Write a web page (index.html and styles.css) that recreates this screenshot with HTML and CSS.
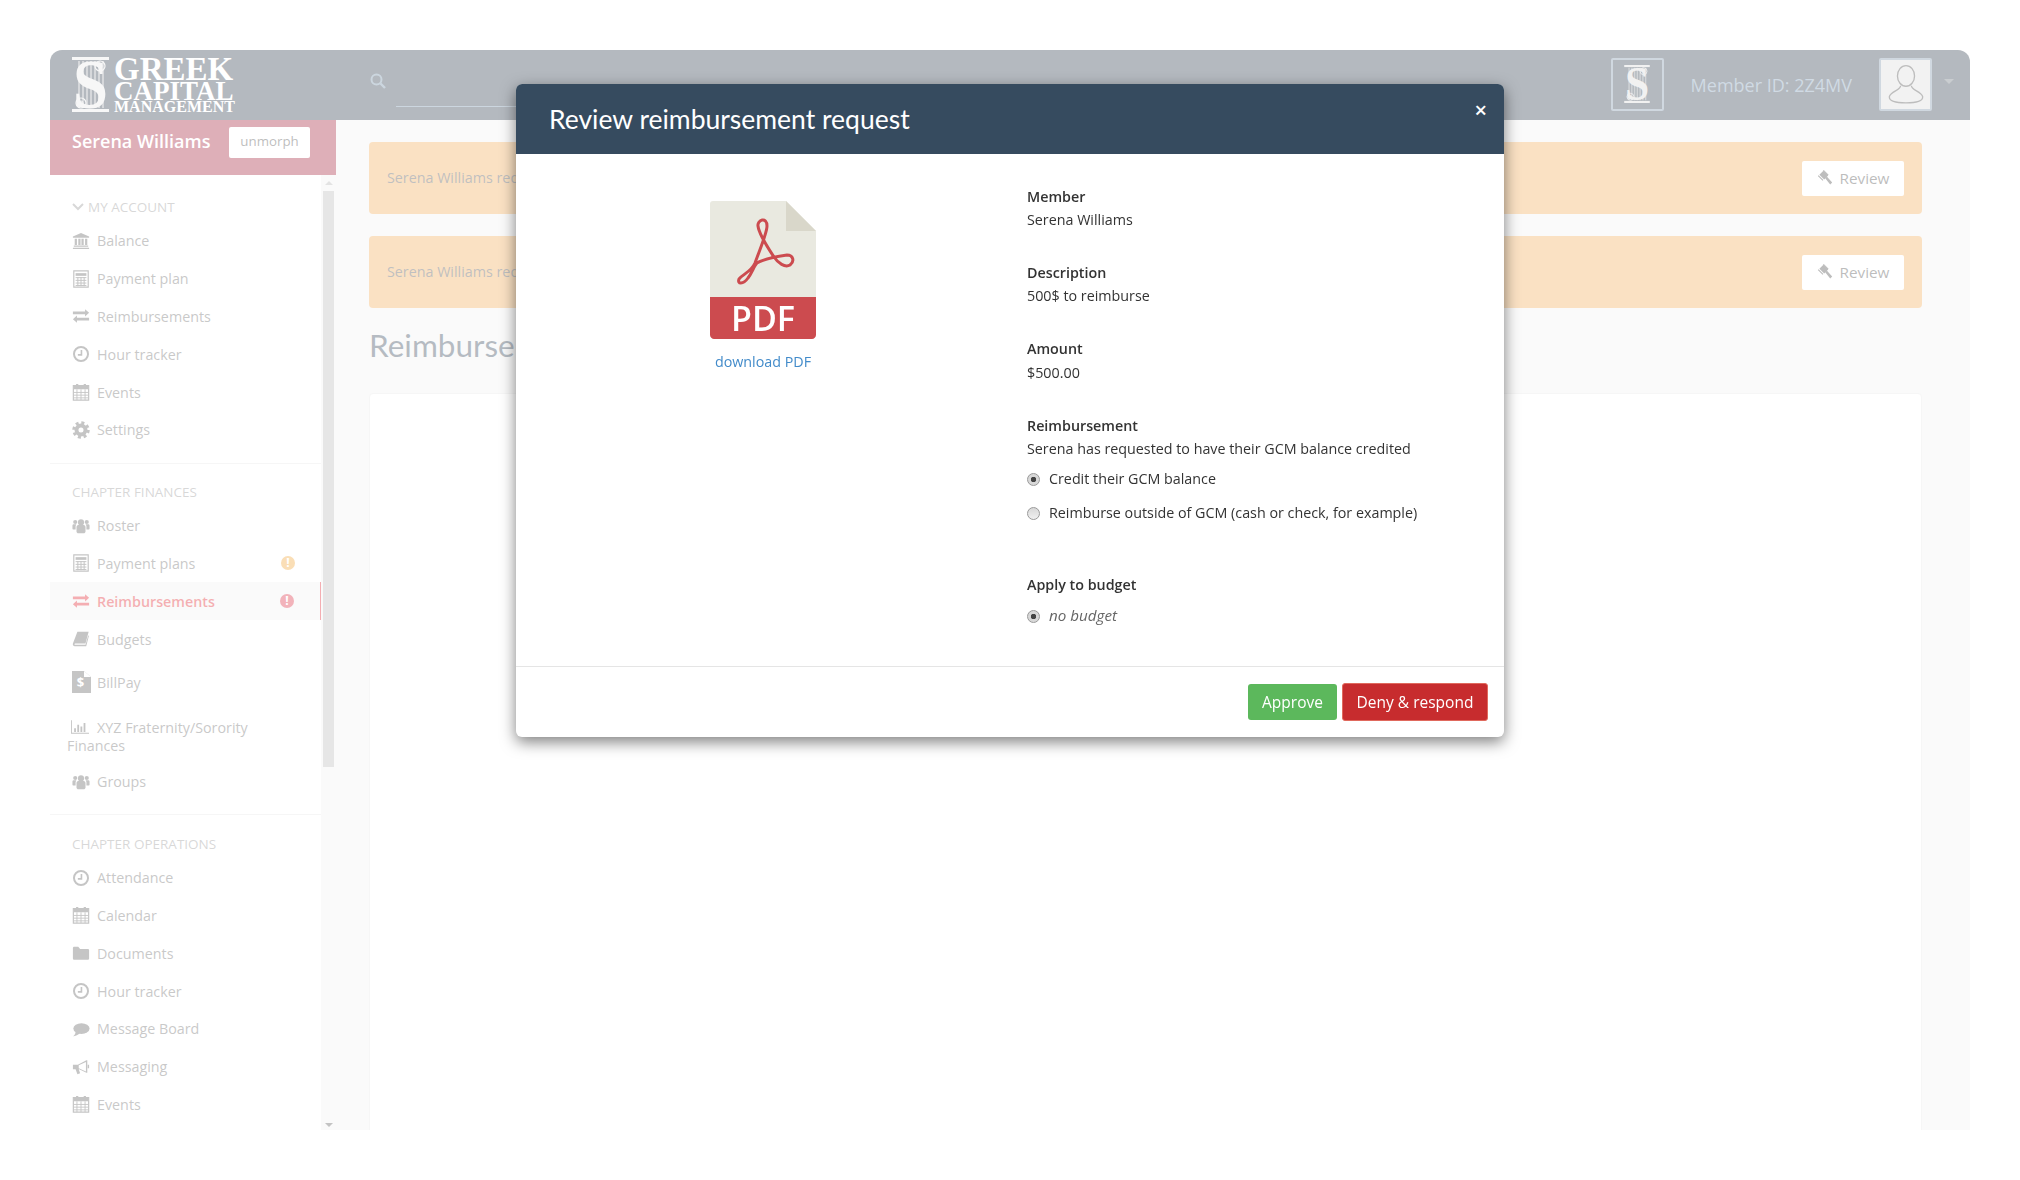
FILE: index.html
```html
<!DOCTYPE html>
<html lang="en">
<head>
  <meta charset="UTF-8">
  <title>Reimbursements</title>
  <link rel="stylesheet" href="styles.css">
</head>
<body>
  <!-- icon set -->
  <svg class="icon-defs" width="0" height="0" aria-hidden="true">
    <symbol id="i-mark" viewBox="0 0 37 55">
      <rect x="0" y="0" width="37" height="3"/>
      <rect x="0" y="52" width="37" height="3"/>
      <path d="M6 4h2v47H6zM10 4h2v47h-2zM14 4h2v47h-2zM18 4h2v47h-2zM22 4h2v47h-2zM26 4h2v47h-2zM30 4h2v47h-2z" opacity=".5"/>
      <circle cx="28" cy="9" r="5" fill="none" stroke="currentColor" stroke-width="1.200"/>
      <circle cx="28" cy="9" r="2" fill="none" stroke="currentColor" stroke-width="1"/>
      <circle cx="9" cy="46" r="5" fill="none" stroke="currentColor" stroke-width="1.200"/>
      <circle cx="9" cy="46" r="2" fill="none" stroke="currentColor" stroke-width="1"/>
      <text x="1" y="51" textLength="35" lengthAdjust="spacingAndGlyphs" class="mark-letter">S</text>
    </symbol>
    <symbol id="i-bank" viewBox="0 0 20 20">
      <path d="M10 1l9 4v1.500H1V5z"/>
      <path d="M3 7.500h2.500v7H3zM7 7.500h2.500v7H7zM10.500 7.500H13v7h-2.500zM14.500 7.500H17v7h-2.500zM2 15h16v1.500H2zM1 17.500h18V19H1z"/>
    </symbol>
    <symbol id="i-calc" viewBox="0 0 20 20">
      <path d="M2 1h16v18H2z" fill="none" stroke="currentColor" stroke-width="1.300"/>
      <path d="M4 3.500h12v3H4z"/>
      <path d="M4 8.500h12M4 11.500h12M4 14.500h12M4 17.200h12M6.500 8v10M10 8v10M13.500 8v10" fill="none" stroke="currentColor" stroke-width="1.100"/>
    </symbol>
    <symbol id="i-exchange" viewBox="0 0 20 20">
      <path d="M1 5h13.500V2.500L19 6.500l-4.500 4V8H1zM19 12H5.500V9.500L1 13.500l4.500 4V15H19z"/>
    </symbol>
    <symbol id="i-clock" viewBox="0 0 20 20">
      <circle cx="10" cy="10" r="7.800" fill="none" stroke="currentColor" stroke-width="2.200"/>
      <path d="M10.500 5.500v5.500H6.500" fill="none" stroke="currentColor" stroke-width="1.800"/>
    </symbol>
    <symbol id="i-calendar" viewBox="0 0 20 20">
      <path d="M1.500 3h17v16h-17z" fill="none" stroke="currentColor" stroke-width="1.300"/>
      <path d="M2 3h16v4H2zM4.500 1h2.500v4H4.500zM13 1h2.500v4H13z"/>
      <path d="M2 10.500h16M2 13.500h16M2 16.500h16M5.500 7v12M10 7v12M14.500 7v12" fill="none" stroke="currentColor" stroke-width="1"/>
    </symbol>
    <symbol id="i-cog" viewBox="0 0 20 20">
      <circle cx="10" cy="10" r="5" fill="none" stroke="currentColor" stroke-width="4.400"/>
      <circle cx="10" cy="10" r="8" fill="none" stroke="currentColor" stroke-width="3.400" stroke-dasharray="3.300 3"/>
    </symbol>
    <symbol id="i-users" viewBox="0 0 20 20">
      <circle cx="10" cy="6" r="3.400"/>
      <circle cx="3.600" cy="5.500" r="2.300"/>
      <circle cx="16.400" cy="5.500" r="2.300"/>
      <path d="M5 11c0-1 1-2 2-2h6c1 0 2 1 2 2v5c0 1-1 2-2 2H7c-1 0-2-1-2-2zM.500 9.500c0-1 .8-1.500 1.500-1.500h2.800L4 10v4H1.500c-.6 0-1-.5-1-1zM19.500 9.500c0-1-.8-1.500-1.500-1.500h-2.800L16 10v4h2.500c.6 0 1-.5 1-1z"/>
    </symbol>
    <symbol id="i-book" viewBox="0 0 20 20">
      <path d="M6 2h12.500l-3.500 13H3.500c-.8 0-1 1.500 0 1.500H15l3-10.500.8.500L15.800 18H3c-1.500 0-2.500-1.500-2-3z"/>
    </symbol>
    <symbol id="i-billpay" viewBox="0 0 19 22">
      <path d="M0 0h12l7 6v16H0z"/>
      <path d="M12 0v6h7z" fill="#fff"/>
      <text x="8.500" y="15.500" text-anchor="middle" class="bill-letter">$</text>
    </symbol>
    <symbol id="i-bars" viewBox="0 0 20 15">
      <path d="M0 0h1v13.800h19v1.200H0z"/>
      <path d="M3.500 9h2v4h-2zM7 5h2v8H7zM10.500 7h2v6h-2zM14 3h2v10h-2z"/>
    </symbol>
    <symbol id="i-folder" viewBox="0 0 20 20">
      <path d="M1 4.500C1 3.500 1.800 3 2.500 3h4.500L9 5.500h8.500c.8 0 1.500.6 1.500 1.500v9c0 .9-.7 1.500-1.500 1.500h-15C1.700 17.500 1 16.900 1 16z"/>
    </symbol>
    <symbol id="i-comment" viewBox="0 0 20 20">
      <ellipse cx="10.500" cy="9.500" rx="9" ry="6"/>
      <path d="M4 13c0 2-1 4-3 5 3 0 6-1.500 8-3.500z"/>
    </symbol>
    <symbol id="i-bullhorn" viewBox="0 0 20 20">
      <path d="M1 7.500h5.500L16 2.500h1v14h-1l-8-4-.5 0 1.500 4.500-3 1L4 12.500H1zM17.500 7.500h1.500v4h-1.500z"/>
      <path d="M7.500 8v3.500l8 3.500V4.500z" fill="#fff"/>
    </symbol>
    <symbol id="i-gavel" viewBox="0 0 20 20">
      <path d="M8 1l6 6-5 5-6-6zM10.500 10.500l2-2 6.500 7-2.500 2.500z"/>
      <path d="M1 7.500l1-1 6 6-1 1zM7.500 .5l1-.5 6 6-1 1z"/>
    </symbol>
    <symbol id="i-search" viewBox="0 0 16 16">
      <circle cx="6.500" cy="6.500" r="5" fill="none" stroke="currentColor" stroke-width="2"/>
      <path d="M10.500 10.500l4.500 4.500" fill="none" stroke="currentColor" stroke-width="2.400"/>
    </symbol>
    <symbol id="i-person" viewBox="0 0 40 44">
      <ellipse cx="20" cy="13" rx="9.500" ry="11.500" fill="none" stroke="currentColor" stroke-width="1.500"/>
      <path d="M14 24c0 5-11 6-12.500 12C1 41 8 43 20 43s19-2 18.500-7C37 30 26 29 26 24" fill="none" stroke="currentColor" stroke-width="1.500"/>
    </symbol>
  </svg>

  <div class="app">
    <header class="topbar">
      <a class="brand">
        <svg class="brand-mark"><use href="#i-mark"/></svg>
        <div class="brand-name">
          <span class="brand-l1">GREEK</span>
          <span class="brand-l2">CAPITAL</span>
          <span class="brand-l3">MANAGEMENT</span>
        </div>
      </a>
      <div class="search">
        <svg class="search-icon"><use href="#i-search"/></svg>
        <div class="search-line"></div>
      </div>
      <div class="top-right">
        <div class="chapter-box"><svg class="chapter-mark"><use href="#i-mark"/></svg></div>
        <span class="member-id">Member ID: 2Z4MV</span>
        <div class="avatar"><svg class="avatar-icon"><use href="#i-person"/></svg></div>
        <span class="caret"></span>
      </div>
    </header>

    <div class="columns">
      <aside class="sidebar">
        <div class="morph-bar">
          <span class="morph-name">Serena Williams</span>
          <button class="morph-btn">unmorph</button>
        </div>
        <div class="side-scroll">
          <nav class="side-nav">
            <section class="nav-group first">
              <h4 class="nav-title"><svg class="chevron" viewBox="0 0 12 8"><path d="M1 1l5 5 5-5" fill="none" stroke="currentColor" stroke-width="2"/></svg>MY ACCOUNT</h4>
              <a class="nav-item"><svg class="nav-icon"><use href="#i-bank"/></svg>Balance</a>
              <a class="nav-item"><svg class="nav-icon"><use href="#i-calc"/></svg>Payment plan</a>
              <a class="nav-item"><svg class="nav-icon"><use href="#i-exchange"/></svg>Reimbursements</a>
              <a class="nav-item"><svg class="nav-icon"><use href="#i-clock"/></svg>Hour tracker</a>
              <a class="nav-item"><svg class="nav-icon"><use href="#i-calendar"/></svg>Events</a>
              <a class="nav-item"><svg class="nav-icon"><use href="#i-cog"/></svg>Settings</a>
            </section>
            <section class="nav-group">
              <h4 class="nav-title">CHAPTER FINANCES</h4>
              <a class="nav-item"><svg class="nav-icon"><use href="#i-users"/></svg>Roster</a>
              <a class="nav-item"><svg class="nav-icon"><use href="#i-calc"/></svg>Payment plans<span class="badge warn">!</span></a>
              <a class="nav-item active"><svg class="nav-icon"><use href="#i-exchange"/></svg>Reimbursements<span class="badge danger">!</span></a>
              <a class="nav-item"><svg class="nav-icon"><use href="#i-book"/></svg>Budgets</a>
              <a class="nav-item tall"><svg class="nav-icon bill"><use href="#i-billpay"/></svg>BillPay</a>
              <a class="nav-item wrap"><svg class="nav-icon bars"><use href="#i-bars"/></svg>XYZ Fraternity/Sorority Finances</a>
              <a class="nav-item"><svg class="nav-icon"><use href="#i-users"/></svg>Groups</a>
            </section>
            <section class="nav-group last">
              <h4 class="nav-title">CHAPTER OPERATIONS</h4>
              <a class="nav-item"><svg class="nav-icon"><use href="#i-clock"/></svg>Attendance</a>
              <a class="nav-item"><svg class="nav-icon"><use href="#i-calendar"/></svg>Calendar</a>
              <a class="nav-item"><svg class="nav-icon"><use href="#i-folder"/></svg>Documents</a>
              <a class="nav-item"><svg class="nav-icon"><use href="#i-clock"/></svg>Hour tracker</a>
              <a class="nav-item"><svg class="nav-icon"><use href="#i-comment"/></svg>Message Board</a>
              <a class="nav-item"><svg class="nav-icon"><use href="#i-bullhorn"/></svg>Messaging</a>
              <a class="nav-item"><svg class="nav-icon"><use href="#i-calendar"/></svg>Events</a>
            </section>
          </nav>
          <div class="scrollbar">
            <span class="arrow up"></span>
            <div class="thumb"></div>
            <span class="arrow down"></span>
          </div>
        </div>
      </aside>

      <main class="content">
        <div class="notice">
          <span>Serena Williams requested a reimbursement</span>
          <button class="review-btn"><svg class="review-icon"><use href="#i-gavel"/></svg>Review</button>
        </div>
        <div class="notice">
          <span>Serena Williams requested a reimbursement</span>
          <button class="review-btn"><svg class="review-icon"><use href="#i-gavel"/></svg>Review</button>
        </div>
        <h1 class="page-title">Reimbursements</h1>
        <div class="table-card"></div>
      </main>
    </div>
  </div>

  <!-- modal -->
  <div class="backdrop"></div>
  <div class="modal">
    <div class="modal-head">
      <h2>Review reimbursement request</h2>
      <button class="modal-close">&times;</button>
    </div>
    <div class="modal-body">
      <div class="doc-col">
        <svg class="pdf-icon" viewBox="0 0 106 138">
          <path d="M3 0h73l30 30v66H0V3c0-2 1-3 3-3z" fill="#e9e9e0"/>
          <path d="M76 0l30 30H76z" fill="#d9d7ca"/>
          <path d="M0 96h106v38c0 2-2 4-4 4H4c-2 0-4-2-4-4z" fill="#cc4b4f"/>
          <path d="M48 25C47 19 57 15 57 25C57 32 50 48 45 62C41 71 33 73 29 78C27 83 33 84 38 77C42 72 44 65 47 62C53 58 70 55 77 54C83 54 85 60 80 64C75 67 68 62 64 56C58 47 49 33 48 25Z" fill="none" stroke="#cc4b4f" stroke-width="3"/>
          <text x="53" y="130" text-anchor="middle" class="pdf-label">PDF</text>
        </svg>
        <a class="doc-link">download PDF</a>
      </div>
      <div class="info-col">
        <div class="field">
          <div class="field-label">Member</div>
          <div>Serena Williams</div>
        </div>
        <div class="field">
          <div class="field-label">Description</div>
          <div>500$ to reimburse</div>
        </div>
        <div class="field">
          <div class="field-label">Amount</div>
          <div>$500.00</div>
        </div>
        <div class="field reimburse">
          <div class="field-label">Reimbursement</div>
          <div>Serena has requested to have their GCM balance credited</div>
          <label class="radio"><input type="radio" name="how" checked>Credit their GCM balance</label>
          <label class="radio"><input type="radio" name="how">Reimburse outside of GCM (cash or check, for example)</label>
        </div>
        <div class="field">
          <div class="field-label">Apply to budget</div>
          <label class="radio none"><input type="radio" name="budget" checked><em>no budget</em></label>
        </div>
      </div>
    </div>
    <div class="modal-foot">
      <button class="btn btn-ok">Approve</button>
      <button class="btn btn-deny">Deny &amp; respond</button>
    </div>
  </div>
</body>
</html>
```

FILE: styles.css
```css
* {
  box-sizing: border-box;
}

html, body {
  margin: 0;
  padding: 0;
}

body {
  width: 2020px;
  height: 1180px;
  padding: 50px;
  overflow: hidden;
  background: #fff;
  font-family: "Open Sans", sans-serif;
  font-size: 14.300px;
  color: #333;
}

button {
  font-family: inherit;
}

.icon-defs {
  position: absolute;
}

.mark-letter {
  font-family: "Liberation Serif", serif;
  font-weight: bold;
  font-size: 70px;
  fill: currentColor;
}

.bill-letter {
  font-family: "Open Sans", sans-serif;
  font-weight: bold;
  font-size: 13px;
  fill: #fff;
}

/* frame */
.app {
  width: 1920px;
  height: 1080px;
  display: flex;
  flex-direction: column;
  border-radius: 12px 12px 0 0;
  overflow: hidden;
  background: #f0f0f0;
}

.topbar {
  height: 70px;
  flex: none;
  display: flex;
  align-items: center;
  padding: 0 16px 0 22px;
  background: #2a3848;
  color: #fff;
}

.brand {
  display: flex;
  gap: 5px;
  width: 298px;
  color: #e9e9e9;
}

.brand-mark {
  width: 37px;
  height: 55px;
  fill: currentColor;
  color: #e9e9e9;
}

.brand-name {
  display: flex;
  flex-direction: column;
  font-family: "Liberation Serif", serif;
  font-weight: bold;
  color: #fff;
  white-space: nowrap;
}

.brand-l1 {
  font-size: 33px;
  line-height: 24px;
}

.brand-l2 {
  font-size: 27px;
  line-height: 20px;
}

.brand-l3 {
  font-size: 16px;
  line-height: 12px;
}

.search {
  display: flex;
  align-items: center;
  gap: 10px;
}

.search-icon {
  width: 16px;
  height: 16px;
  margin-top: -8px;
  color: #6d8ba3;
}

.search-line {
  width: 260px;
  height: 1px;
  margin-top: 42px;
  background: #6d8ba3;
}

.top-right {
  margin-left: auto;
  margin-bottom: 2px;
  display: flex;
  align-items: center;
}

.chapter-box, .avatar {
  width: 53px;
  height: 53px;
  display: flex;
  align-items: center;
  justify-content: center;
  border: 2px solid #788fa6;
  border-radius: 2px;
}

.chapter-mark {
  width: 26px;
  height: 38px;
  fill: currentColor;
  color: #d8d8d8;
}

.member-id {
  margin: 1px 27px 0;
  font-size: 18px;
  color: #7896b2;
}

.avatar {
  background: #dadada;
}

.avatar-icon {
  width: 36px;
  height: 40px;
  color: #444;
}

.caret {
  margin: -5px 0 0 12px;
  border-top: 5px solid #666f78;
  border-left: 5px solid transparent;
  border-right: 5px solid transparent;
}

.columns {
  flex: 1;
  display: flex;
  min-height: 0;
}

/* sidebar */
.sidebar {
  width: 286px;
  flex: none;
  display: flex;
  flex-direction: column;
  background: #fff;
}

.morph-bar {
  height: 55px;
  flex: none;
  display: flex;
  align-items: flex-start;
  padding: 7px 26px 0 22px;
  background: #a11a34;
}

.morph-name {
  flex: 1;
  font-size: 18px;
  font-weight: 600;
  line-height: 29px;
  color: #fff;
}

.morph-btn {
  width: 81px;
  height: 31px;
  padding: 0 0 3px;
  border: none;
  border-radius: 2px;
  background: #fff;
  font-size: 13.300px;
  color: #444;
}

.side-scroll {
  flex: 1;
  display: flex;
  min-height: 0;
}

.side-nav {
  width: 271px;
  overflow: hidden;
  color: #646464;
}

.nav-group {
  padding: 19px 0 13px;
  border-bottom: 1px solid #e4e4e4;
}

.nav-group.first {
  padding-top: 23px;
  padding-bottom: 14px;
}

.nav-group.last {
  border-bottom: none;
  padding-top: 20px;
}

.nav-title {
  margin: 0 0 6px;
  padding-left: 22px;
  font-size: 13.500px;
  font-weight: 400;
  line-height: 18px;
  color: #909090;
}

.chevron {
  width: 12px;
  height: 8px;
  margin-right: 4px;
  vertical-align: 1px;
}

.nav-item {
  height: 37.800px;
  display: flex;
  align-items: center;
  padding: 0 26px 0 22px;
}

.nav-icon {
  width: 18px;
  height: 18px;
  margin-right: 7px;
  fill: currentColor;
  color: #5a5a5a;
  flex: none;
}

.nav-icon.bill {
  width: 19px;
  height: 22px;
  margin-right: 6px;
}

.nav-item.tall {
  height: 49px;
}

.nav-item.wrap {
  display: block;
  height: 56px;
  padding: 12px 60px 0 17px;
  line-height: 18px;
}

.nav-icon.bars {
  height: 14px;
  margin-left: 4px;
  margin-right: 8px;
  vertical-align: -1px;
}

.nav-item.active {
  width: 271px;
  background: #f0f0f0;
  border-right: 1px solid #df1823;
  font-weight: 600;
  color: #df1823;
}

.nav-item.active .nav-icon {
  color: #df1823;
}

.badge {
  width: 14px;
  height: 14px;
  margin-left: auto;
  border-radius: 50%;
  font-size: 12px;
  font-weight: 700;
  line-height: 14px;
  text-align: center;
  color: #fff;
}

.badge.warn {
  background: #f0a030;
}

.badge.danger {
  background: #d9263a;
}

.scrollbar {
  width: 15px;
  display: flex;
  flex-direction: column;
  align-items: center;
  background: #f0f0f0;
}

.thumb {
  width: 11px;
  height: 576px;
  margin-top: 6px;
  background: #b7b7b7;
}

.arrow {
  border-left: 4px solid transparent;
  border-right: 4px solid transparent;
}

.arrow.up {
  margin-top: 6px;
  border-bottom: 4px solid #b0b0b0;
}

.arrow.down {
  margin-top: auto;
  margin-bottom: 3px;
  border-top: 4px solid #555;
}

/* main */
.content {
  flex: 1;
  min-width: 0;
  padding: 22px 48px 0 33px;
}

.notice {
  height: 72px;
  margin-bottom: 22px;
  display: flex;
  align-items: center;
  justify-content: space-between;
  padding: 0 18px 0 18px;
  border-radius: 4px;
  background: #f1a954;
  color: #4a4a4a;
}

.notice span {
  margin-bottom: 2px;
}

.review-btn {
  width: 102px;
  height: 35px;
  display: flex;
  align-items: center;
  justify-content: center;
  gap: 7px;
  border: none;
  border-radius: 2px;
  background: #fff;
  font-size: 15.300px;
  color: #424242;
}

.review-icon {
  width: 16px;
  height: 16px;
  fill: currentColor;
}

.page-title {
  height: 63px;
  margin: -2px 0 2px;
  font-family: Lato, sans-serif;
  font-size: 31.500px;
  font-weight: 400;
  line-height: 34px;
  color: #2c3e50;
}

.table-card {
  height: 800px;
  background: #fff;
  border: 1px solid #e4e4e4;
  border-radius: 4px;
}

/* modal */
.backdrop {
  position: fixed;
  top: 0;
  left: 0;
  right: 0;
  bottom: 0;
  background: rgba(255, 255, 255, 0.65);
}

.modal {
  position: absolute;
  top: 84px;
  left: 516px;
  width: 988px;
  height: 653px;
  display: flex;
  flex-direction: column;
  border-radius: 6px;
  background: #fff;
  box-shadow: 0 5px 15px rgba(0, 0, 0, 0.5);
}

.modal-head {
  height: 70px;
  flex: none;
  display: flex;
  align-items: center;
  justify-content: space-between;
  padding: 0 17px 1px 33px;
  border-radius: 6px 6px 0 0;
  background: #364b5f;
}

.modal-head h2 {
  margin: 0;
  font-family: Lato, sans-serif;
  font-size: 26.500px;
  font-weight: 400;
  color: #fff;
}

.modal-close {
  margin-bottom: 20px;
  padding: 0;
  border: none;
  background: none;
  font-size: 22px;
  font-weight: 600;
  line-height: 1;
  color: #fff;
}

.modal-body {
  flex: 1;
  display: grid;
  grid-template-columns: 1fr 1fr;
  padding-top: 30.500px;
}

.doc-col {
  display: flex;
  flex-direction: column;
  align-items: center;
  padding: 16.500px 0 0 0;
}

.pdf-icon {
  width: 106px;
  height: 138px;
}

.pdf-label {
  font-family: "Open Sans", sans-serif;
  font-size: 34px;
  font-weight: 600;
  fill: #fff;
}

.doc-link {
  margin-top: 13px;
  color: #428bca;
}

.info-col {
  padding-left: 17px;
  line-height: 23.200px;
}

.field {
  margin-bottom: 30px;
}

.field-label {
  font-weight: 600;
}

.field.reimburse {
  margin-bottom: 43.500px;
}

.radio {
  height: 33.500px;
  display: flex;
  align-items: center;
  gap: 9px;
}

.field-label + div + .radio {
  margin-top: 2px;
}

.field-label + .radio {
  margin-top: 3px;
}

.radio input {
  appearance: none;
  width: 13px;
  height: 13px;
  margin: 2px 0 0;
  border: 1px solid #999;
  border-radius: 50%;
  background: linear-gradient(#d8d8d8, #f0f0f0);
}

.radio input:checked {
  background: radial-gradient(circle, #444 0 2.500px, #d8d8d8 3px);
}

.radio em {
  font-size: 15.200px;
  color: #666;
}

.modal-foot {
  height: 71px;
  flex: none;
  display: flex;
  align-items: center;
  justify-content: flex-end;
  gap: 5px;
  padding: 0 16px 0 0;
  border-top: 1px solid #e5e5e5;
}

.btn {
  padding: 0;
  border: none;
  border-radius: 3px;
  font-size: 15.500px;
  color: #fff;
}

.btn-ok {
  width: 89px;
  height: 36px;
  background: #5cb85c;
}

.btn-deny {
  width: 146px;
  height: 38px;
  border: 1px solid #e0695d;
  background: #c72c2e;
}
```
